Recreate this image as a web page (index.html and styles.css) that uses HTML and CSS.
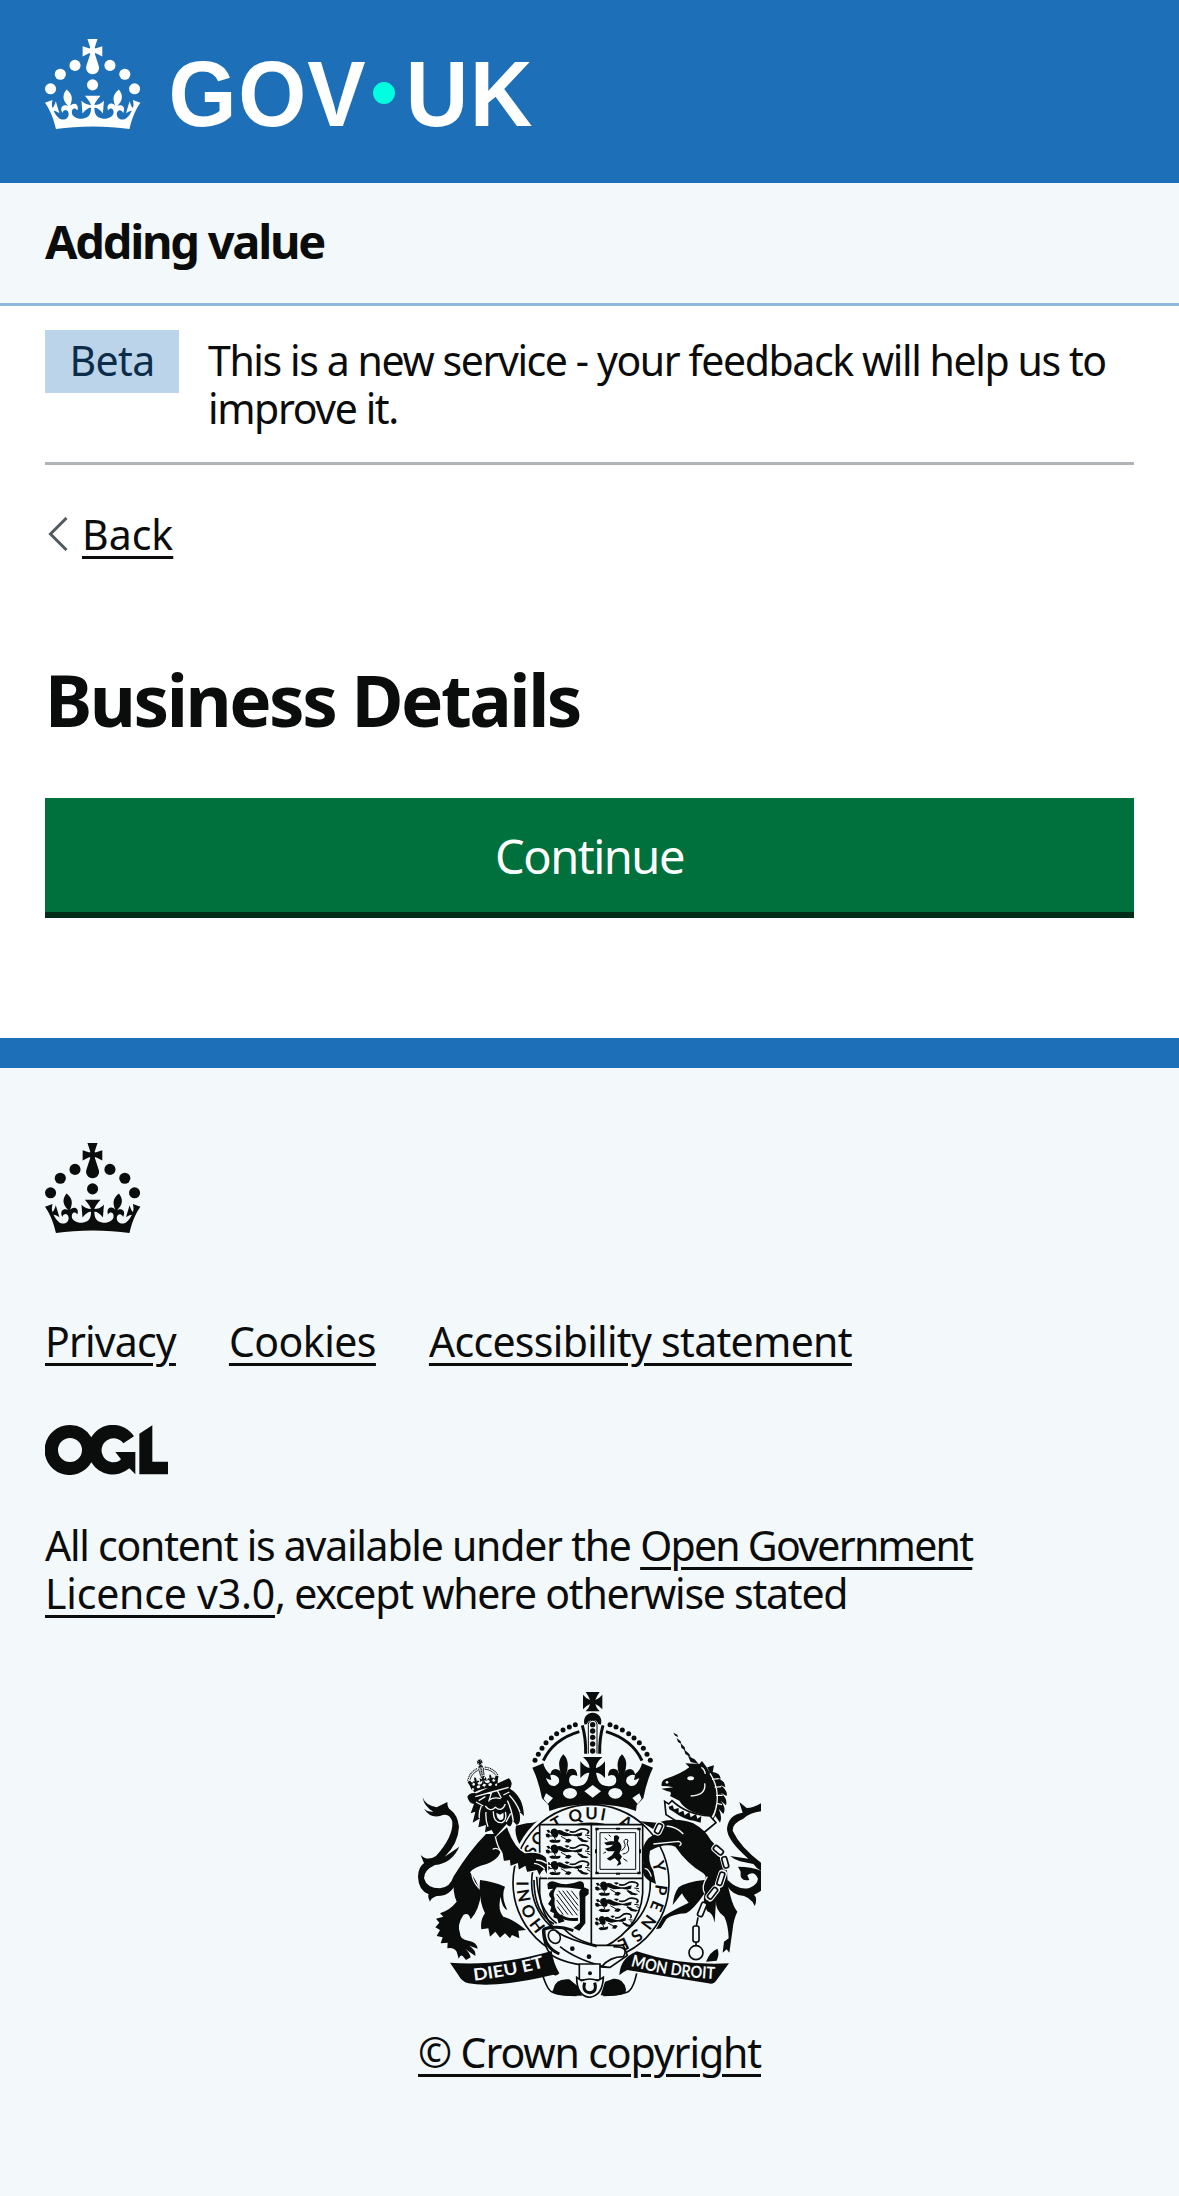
FILE: index.html
```html
<!DOCTYPE html>
<html lang="en">
<head>
<meta charset="utf-8">
<title>Business Details - Adding value - GOV.UK</title>
<link rel="stylesheet" href="styles.css">
</head>
<body>
<header class="header">
  <svg class="logo" viewBox="0 0 324 60" role="img" aria-label="GOV.UK">
    <g id="crown">
      <circle cx="20" cy="17.6" r="3.7"/><circle cx="10.2" cy="23.5" r="3.7"/><circle cx="3.7" cy="33.2" r="3.7"/><circle cx="31.7" cy="30.6" r="3.7"/><circle cx="43.3" cy="17.6" r="3.7"/><circle cx="53.2" cy="23.5" r="3.7"/><circle cx="59.7" cy="33.2" r="3.7"/>
      <path d="M33.1,9.8c.2-.1.3-.3.5-.5l4.6,2.4v-6.8l-4.6,1.5c-.1-.2-.3-.3-.5-.5l1.9-5.9h-6.7l1.9,5.9c-.2.1-.3.3-.5.5l-4.6-1.5v6.8l4.6-2.4c.1.2.3.3.5.5l-2.6,8c-.9,2.8,1.2,5.7,4.1,5.7h0c3,0,5.1-2.9,4.1-5.7l-2.6-8ZM37,37.9s-3.4,3.8-4.1,6.1c2.2,0,4.2-.5,6.4-2.8l-.7,8.5c-2-2.8-4.4-4.1-5.7-3.8.1,3.1.5,6.7,5.8,7.2,3.7.3,6.7-1.5,7-3.8.4-2.6-2-4.3-3.7-1.6-1.4-4.5,2.4-6.1,4.9-3.2-1.9-4.5-1.8-7.7,2.4-10.9,3,4,2.6,7.3-1.2,11.1,2.4-1.3,6.2,0,4,4.6-1.2-2.8-3.7-2.2-4.2.2-.3,1.7.7,3.7,3,4.2,1.9.3,4.7-.9,7-5.9-1.3,0-2.4.7-3.9,1.7l2.4-8c.6,2.3,1.4,3.7,2.2,4.5.6-1.6.5-2.8,0-5.3l5,1.8c-2.6,3.6-5.2,8.7-7.3,17.5-7.4-1.1-15.7-1.7-24.5-1.7h0c-8.8,0-17.1.6-24.5,1.7-2.1-8.9-4.7-13.9-7.3-17.5l5-1.8c-.5,2.5-.6,3.7,0,5.3.8-.8,1.6-2.3,2.2-4.5l2.4,8c-1.5-1-2.6-1.7-3.9-1.7,2.3,5,5.2,6.2,7,5.9,2.3-.4,3.3-2.4,3-4.2-.5-2.4-3-3.1-4.2-.2-2.2-4.6,1.6-6,4-4.6-3.7-3.7-4.2-7.1-1.2-11.1,4.2,3.2,4.3,6.4,2.4,10.9,2.5-2.8,6.3-1.3,4.9,3.2-1.8-2.7-4.1-1-3.7,1.6.3,2.3,3.3,4.1,7,3.8,5.4-.5,5.7-4.2,5.8-7.2-1.3-.2-3.7,1-5.7,3.8l-.7-8.5c2.2,2.3,4.2,2.7,6.4,2.8-.7-2.3-4.1-6.1-4.1-6.1h10.6,0Z"/>
    </g>
    <text class="logo-text" transform="scale(.94 1)" y="58" x="87.6 137 186">GOV</text>
    <circle class="logo-dot" cx="226" cy="36" r="7.3"/>
    <text class="logo-text" transform="scale(.93 1)" y="58" x="258.6 304.6">UK</text>
  </svg>
</header>
<section class="service-nav"><span class="service-name">Adding value</span></section>
<div class="container">
  <div class="phase-banner">
    <strong class="tag">Beta</strong>
    <p class="phase-text">This is a new service - your feedback will help us to<br>improve it.</p>
  </div>
  <a class="back-link" href="#"><svg class="chevron" viewBox="0 0 20 34"><path d="M18.5 1 2.5 17 18.5 33"/></svg><span class="link">Back</span></a>
  <main>
    <h1 class="heading">Business Details</h1>
    <button class="button" type="button">Continue</button>
  </main>
</div>
<footer class="footer">
  <svg class="footer-crown" viewBox="0 0 64 60"><use href="#crown"/></svg>
  <nav class="footer-links"><a class="link link-privacy" href="#">Privacy</a><a class="link link-cookies" href="#">Cookies</a><a class="link link-accessibility" href="#">Accessibility statement</a></nav>
  <svg class="ogl" viewBox="0 0 369 150">
    <path fill-rule="evenodd" d="M75 0A75 75 0 0 1 139 37A75 75 0 0 1 267 34L235 55A36 36 0 1 0 222 108L228 103L211 81H271V148L253 130A75 75 0 0 1 139 112A75 75 0 1 1 75 0ZM75 39A36 36 0 1 0 75 111A36 36 0 1 0 75 39ZM283 26 322 1V110H369V148H283Z"/>
  </svg>
  <p class="licence">All content is available under the <a class="link link-open" href="#">Open Government</a><br><a class="link link-version" href="#">Licence v3.0</a>, except where otherwise stated</p>
  <a class="copyright" href="#">
    <svg class="arms" viewBox="24 36 1029 918">
      <defs>
        <path id="garter-path" d="M545 798A190 190 0 1 1 546 798"/>
        <path id="motto-left" d="M192 902Q300 890 415 858"/>
        <path id="motto-right" d="M662 858Q780 892 930 898"/>
        <g id="crown-half">
          <path d="M367 263L400 250Q404 270 420 282L424 300Q418 300 408 294Q416 322 436 317Q454 308 444 292Q434 280 420 286Q426 258 450 272L454 284Q438 244 460 223Q482 244 468 284L474 270Q500 258 502 288Q485 280 479 292Q472 312 492 318Q522 322 532 300Q536 288 538 278Q525 278 511 294V244Q525 262 538 264Q540 250 519 231H549V373Q470 373 418 393L416 376L396 355Q385 300 367 263Z"/>
          <path class="thick" d="M400 242Q430 178 508 155M517 136Q528 175 527 221"/>
          <circle cx="496" cy="134" r="7.5"/><circle cx="478" cy="141" r="7.5"/><circle cx="459" cy="150" r="7.5"/><circle cx="440" cy="161" r="7.5"/><circle cx="424" cy="174" r="7.5"/><circle cx="408" cy="188" r="7.5"/><circle cx="396" cy="205" r="7.5"/><circle cx="385" cy="223" r="7.5"/><circle cx="375" cy="241" r="7.5"/>
          <ellipse class="bg" cx="480" cy="340" rx="21" ry="16"/>
          <path class="bg" d="M408 340 429 354 413 372 401 356Z"/>
        </g>
        <g id="royal-crown">
          <use href="#crown-half"/><use href="#crown-half" transform="matrix(-1 0 0 1 1096 0)"/>
          <path d="M527 36H569Q559 50 556 60Q566 57 577 44V88Q566 76 556 72Q558 83 569 94H527Q538 83 540 72Q530 76 519 88V44Q530 57 540 60Q537 50 527 36Z"/>
          <path d="M524 134A26 26 0 1 1 572 134L565 132A18 18 0 0 0 531 132Z"/>
          <path class="thin" d="M535 221V134A13 13 0 0 1 561 134V221"/>
          <circle cx="548" cy="134" r="8"/><circle cx="548" cy="153" r="8"/><circle cx="548" cy="172" r="8"/><circle cx="548" cy="192" r="8"/><circle cx="548" cy="213" r="8"/>
          <path class="bg" d="M548 315 573 334 548 353 523 334Z"/>
        </g>
        <g id="passant">
          <path d="M20 8Q26 0 36 4L42 14Q44 24 36 30L26 28 20 18ZM38 8Q50 4 58 12L76 18Q88 22 98 18L114 14 112 24Q98 28 86 24L60 26 44 20ZM4 20Q10 14 18 22L14 30 6 28ZM14 40Q22 32 34 38L48 36Q50 44 40 45H22ZM66 36Q74 30 82 38L74 45 62 43ZM98 30Q110 28 118 36L134 40 126 44 112 42ZM6 8 14 6 18 12 12 16ZM60 6Q70 2 76 8L68 12Z"/>
          <path class="thick-tail" d="M76 12Q90 16 100 8T128 6Q138 12 128 18"/>
          <path class="thin" d="M14 12 24 16M16 26 26 24M50 26 70 38M96 22 108 34M122 22 136 24M30 28 34 38M128 28 138 34"/>
        </g>
      </defs>

      <circle class="ring" cx="543" cy="608" r="234"/>
      <circle class="ring" cx="543" cy="608" r="178"/>
      <text class="garter"><textPath href="#garter-path" startOffset="152">HONI</textPath></text>
      <text class="garter"><textPath href="#garter-path" startOffset="376">SO</textPath></text>
      <text class="garter"><textPath href="#garter-path" startOffset="480">T</textPath></text>
      <text class="garter"><textPath href="#garter-path" startOffset="530">QUI</textPath></text>
      <text class="garter"><textPath href="#garter-path" startOffset="676">A</textPath></text>
      <text class="garter"><textPath href="#garter-path" startOffset="832">Y</textPath></text>
      <text class="garter garter-wide"><textPath href="#garter-path" startOffset="898">PENSE</textPath></text>

      <path class="field" d="M389 434H698V640Q690 760 544 820Q398 760 389 640Z"/>
      <path class="rule" d="M544 434V820M389 595H698"/>
      <use href="#passant" x="403" y="443"/><use href="#passant" x="403" y="491"/><use href="#passant" x="403" y="540"/>
      <use href="#passant" x="551" y="602"/><use href="#passant" x="551" y="651"/><use href="#passant" transform="translate(549 708) rotate(-6) scale(.86 1)"/>
      <path class="thin" d="M559 446H689V580H559ZM570 458H677V568H570Z"/>
      <path d="M556 443h10v8h-10zM682 443h10v8h-10zM556 575h10v8h-10zM682 575h10v8h-10zM618 443h12v6h-12zM618 578h12v6h-12zM555 508h6v12h-6zM687 508h6v12h-6z"/>
      <path d="M612 468Q622 462 628 472L624 484Q636 492 634 506L628 520 636 530 630 540 634 552 620 558 626 546 614 534 600 542 590 536 606 526 614 514 594 514 584 506 600 502 610 494 590 496 582 488 600 484 612 484Z"/>
      <path class="thin" d="M634 512Q652 500 642 486Q642 474 654 480Q648 490 656 504Q658 520 638 522M592 480 584 474M588 516 580 520M640 536 652 544M602 470 596 464"/>
      <path d="M412 612Q420 600 436 606Q470 620 508 604Q524 602 522 622L536 628V642L526 650L526 730L508 752L490 744L510 728L509 652Q505 632 514 628Q480 622 440 622Q426 640 434 654Q430 690 452 706L464 724 446 730L442 716L430 712L432 700L420 694L424 680L414 672L424 656Q408 640 430 626L414 628Z"/>
      <path class="thick" d="M450 706Q470 722 504 718"/>
      <path class="strings" d="M446 632 502 706M458 632 504 692M470 632 504 676M484 632 504 658M440 642 488 706M440 660 474 704M442 680 460 704"/>
      <path class="ring" d="M372 600Q372 700 432 732M380 590Q384 690 440 730"/>

      <use href="#royal-crown"/>

      <path d="M38 352Q45 375 80 382L112 366Q112 385 122 390Q143 405 147 440Q145 490 104 530L148 500Q125 550 75 555Q42 570 42 595Q50 625 90 625Q122 620 130 590L138 610Q120 650 80 648Q62 655 60 665Q52 650 56 643Q25 630 24 590Q25 560 42 550L32 525Q52 545 78 528Q130 470 127 425Q118 395 90 408Q60 415 42 386Q55 398 70 395Q42 380 38 352Z"/>
      <path d="M228 462Q180 510 130 590Q128 640 140 665Q120 690 90 700L100 710L78 716L88 728L76 742L90 750L80 768L98 772L92 790L113 788L112 805Q130 800 140 815L146 836Q152 822 158 828L168 840L182 832Q178 815 165 806L196 828Q200 812 178 797L203 806Q200 785 175 782Q150 780 150 760Q140 735 160 705Q176 695 182 718Q208 690 213 640Q200 600 180 577Q190 562 230 552Q274 535 272 505Q262 480 262 462Z"/>
      <path d="M318 437L350 430Q375 430 385 420Q350 450 328 492Q312 460 318 437Z"/>
      <path class="edge" d="M256 470L292 438Q312 500 345 518Q385 512 408 530Q415 540 412 590L402 570Q395 575 388 590L380 572L350 578L345 560L325 572L322 552L300 560L298 542L280 545L276 520Q262 500 256 470Z"/>
      <path class="cut" d="M378 540Q395 540 410 550M372 550Q390 552 404 566M248 508Q262 500 274 515M186 578Q184 600 208 626"/>
      <path d="M210 600Q250 605 285 620Q272 650 292 690Q276 684 272 650Q262 690 280 710Q310 718 348 750L325 752L328 775L306 765L300 775L285 760L270 773L256 755L240 770L235 745L214 748Q210 720 225 700Q205 660 210 600Z"/>
      <path d="M172 350Q180 335 200 340L296 295Q312 305 300 326Q340 350 342 408L328 395Q335 430 320 435L308 422Q302 450 290 432L256 470L245 450L225 457L228 435L205 442L210 415L188 428L196 395L182 400L192 372Q175 368 172 350Z"/>
      <path class="cut" d="M196 350 246 336 296 322M245 336 236 365M262 332 274 354M238 360Q252 350 272 356M226 378Q240 398 256 382Q276 398 286 372M206 362 226 350M280 345 298 336M250 394Q250 430 276 428Q292 420 286 396M298 346Q318 366 330 396M292 362Q306 390 310 424M214 378Q206 396 208 414M228 396Q226 420 234 440M288 426 302 400M198 366 220 378"/>
      <path class="bg" d="M259 398Q260 420 274 420Q284 416 280 398L270 404Z"/>
      <use href="#royal-crown" transform="translate(65 257) rotate(-11) scale(.262 .262)"/>

      <path d="M790 158 802 164 804 172 794 166ZM800 174 812 184 814 192 804 186ZM812 190 824 202 826 212 814 203ZM822 208 838 222 842 232 826 222ZM834 228 854 238 866 252 842 246Z"/>
      <path d="M755 318Q752 300 772 295Q815 280 838 262L826 250L868 252L876 243L890 262Q910 290 918 340Q922 385 905 410L885 405Q830 398 808 362L780 348Q788 334 772 334L754 326L790 322Q775 318 755 318Z"/>
      <path d="M892 262 912 256 908 276Q930 278 932 296L920 294Q946 302 946 322L930 314Q954 330 950 348L932 338Q954 356 948 376L932 362Q950 384 940 402L926 386Q938 410 930 428L916 408L902 432Q938 360 892 262Z"/>
      <path class="cut" d="M884 310Q890 346 842 348M874 262Q884 268 886 282M900 280Q938 340 910 410M906 298 926 296M914 322 934 320M918 346 938 346M920 370 936 374"/>
      <ellipse class="bg" cx="842" cy="295" rx="10" ry="6"/><circle class="bg" cx="771" cy="307" r="4"/>
      <path class="field" d="M764 364L776 372L786 362Q830 404 900 408L918 428L884 456Q820 440 768 404Z"/>
      <path d="M776 380l12-4 4 12 14-4 0 14 14-6 4 14 14-10 4 16 16-10 4 14 12-8-2 20-20-6-14-2-16-6-16-8-14-10-14-8Z"/>
      <path d="M700 500Q712 466 748 458L728 446L690 424L740 428Q800 410 850 430Q886 450 902 480Q952 530 952 590Q952 620 962 650Q970 680 982 695Q970 720 968 748L958 818L950 808L938 818L942 785L956 775Q955 735 943 710Q915 690 918 662L914 728Q908 698 892 694Q876 670 884 640Q850 690 828 700Q790 702 770 716L752 745L738 748L758 712Q770 700 836 668Q820 650 816 640L788 675Q792 640 806 622Q830 605 884 600Q892 590 880 580Q830 550 796 500Q765 488 720 512Q712 545 730 572L738 612L724 606Q690 590 700 550Q694 520 700 500Z"/>
      <path class="cut" d="M770 438Q800 440 820 462M730 492 806 484Q820 490 808 498M884 640Q872 620 892 590M704 566Q716 564 724 590"/>
      <path d="M888 845Q900 815 922 806Q930 820 920 842Z"/>
      <path d="M1053 394Q1020 398 1000 416Q966 430 968 452Q990 500 1053 548V572Q1040 566 1030 552L990 544Q975 540 960 528L1015 536Q950 480 951 445Q955 405 998 398Q992 380 988 366L1010 384Q1030 384 1053 370Z"/>
      <path d="M953 600Q985 632 1018 624Q1042 614 1044 596Q1032 570 1012 586L1018 600Q988 606 992 575L984 560Q1024 560 1053 572V632Q1042 640 1032 644Q1044 655 1034 678Q1022 648 985 645Q955 635 950 610Z"/>

      <g id="chain-links" class="chain-edge">
        <rect x="738" y="428" width="20" height="34" rx="8" transform="rotate(25 745 440)"/>
        <rect x="912" y="494" width="20" height="36" rx="8" transform="rotate(-50 922 508)"/>
        <rect x="937" y="526" width="18" height="40" rx="8" transform="rotate(-15 946 546)"/>
        <rect x="924" y="572" width="18" height="48" rx="8" transform="rotate(18 932 596)"/>
        <rect x="899" y="617" width="18" height="46" rx="8" transform="rotate(38 908 640)"/>
      </g>
      <g class="chain">
        <rect x="740" y="430" width="16" height="30" rx="6" transform="rotate(25 745 440)"/>
        <rect x="914" y="496" width="16" height="32" rx="6" transform="rotate(-50 922 508)"/>
        <rect x="938" y="530" width="15" height="34" rx="6" transform="rotate(-15 946 546)"/>
        <rect x="925" y="576" width="15" height="40" rx="6" transform="rotate(18 932 596)"/>
        <rect x="900" y="621" width="15" height="38" rx="6" transform="rotate(38 908 640)"/>
        <rect x="868" y="667" width="16" height="44" rx="6" transform="rotate(22 878 690)"/>
        <rect x="849" y="738" width="18" height="48" rx="6"/>
        <path d="M894 662 890 670M864 712 859 738M858 786V798"/>
        <circle cx="858" cy="818" r="21"/>
      </g>

      <path class="field" d="M398 750Q410 735 460 744Q490 780 560 796L640 796L652 826L600 862Q480 860 425 826Q400 800 398 750Z"/>
      <path class="thick" d="M402 750Q400 800 448 822M400 748Q440 734 490 752"/>
      <ellipse class="ring" cx="433" cy="770" rx="17" ry="21" transform="rotate(-30 433 770)"/>
      <path class="rule" d="M440 756Q480 780 560 800M450 800Q500 840 590 862M610 800Q660 800 640 830Q600 830 575 860"/>
      <circle cx="487" cy="806" r="7"/><circle cx="537" cy="830" r="7"/>
      <path class="field" d="M508 852H570V900H508Z"/><circle cx="540" cy="880" r="6"/>
      <path d="M430 928Q436 894 478 898L505 920L516 947Q450 950 425 938Z"/>
      <path d="M648 928Q642 894 610 896L585 905L572 946Q630 950 646 938Z"/>
      <path class="rule" d="M396 880Q415 940 430 936Q450 946 500 946M680 880Q668 936 646 938Q620 946 580 946"/>
      <path class="field" d="M500 892Q500 948 538 952Q578 948 580 892L564 902Q540 892 514 902Z"/>
      <path class="thick" d="M524 908Q516 936 540 938Q562 936 554 908"/>

      <path d="M120 848Q260 860 425 813Q430 850 448 880Q440 890 430 884Q260 925 175 910Q155 905 145 885Z"/>
      <path d="M628 886Q630 835 680 814Q810 858 957 850L920 900Q912 914 895 910Q770 890 652 870Q640 875 628 886Z"/>
      <text class="motto"><textPath href="#motto-left" textLength="216" lengthAdjust="spacingAndGlyphs">DIEU ET</textPath></text>
      <text class="motto"><textPath href="#motto-right" textLength="256" lengthAdjust="spacingAndGlyphs">MON DROIT</textPath></text>
    </svg>
    <span class="link link-copyright">© Crown copyright</span>
  </a>
</footer>
</body>
</html>
```
FILE: styles.css
```css
* { box-sizing: border-box; }
body {
  margin: 0;
  background: #fff;
  color: #0b0c0c;
  font: 41px/48px "Noto Sans", "Open Sans", sans-serif;
}
p, h1 { margin: 0; }
a { color: inherit; text-decoration: none; }
svg { display: block; fill: currentColor; }
.link {
  text-decoration: underline;
  text-decoration-thickness: 3px;
  text-underline-offset: 6px;
}
.header {
  height: 183px;
  padding: 39px 45px 0;
  background: #1d70b8;
  color: #fff;
}
.logo { width: 486px; height: 90px; overflow: visible; }
.logo-text { font: bold 62px "Liberation Sans", sans-serif; }
.logo-dot { fill: #00ffe0; }
.service-nav {
  height: 123px;
  padding: 28px 45px 0;
  background: #f3f8fa;
  border-bottom: 3px solid #8eb8dc;
  font-size: 47px;
  line-height: 60px;
  font-weight: bold;
  letter-spacing: -2.25px;
}
.container { padding: 0 45px; }
.phase-banner {
  display: flex;
  align-items: flex-start;
  gap: 29px;
  height: 159px;
  padding-top: 24px;
  border-bottom: 3px solid #b1b4b6;
}
.tag {
  flex: none;
  width: 134px;
  height: 63px;
  padding-top: 6px;
  background: #bbd4ea;
  color: #0c2d4a;
  font-weight: normal;
  letter-spacing: -0.6px;
  text-align: center;
}
.phase-text { padding-top: 6px; white-space: nowrap; letter-spacing: -1.4px; }
.back-link { display: flex; width: max-content; margin-top: 45px; }
.chevron {
  width: 20px;
  height: 34px;
  margin: 7px 14px 0 3px;
  fill: none;
  stroke: #505a5f;
  stroke-width: 3;
}
.heading {
  margin-top: 104px;
  font-size: 71px;
  line-height: 75px;
  letter-spacing: -2.45px;
}
.button {
  display: block;
  width: 100%;
  height: 120px;
  margin: 61px 0 120px;
  padding: 30px 0 27px;
  border: 0;
  border-bottom: 6px solid #002d18;
  background: #00703c;
  color: #fff;
  font: 47px/57px "Noto Sans", "Open Sans", sans-serif;
  letter-spacing: -1.5px;
}
.footer {
  height: 1158px;
  padding: 75px 45px 0;
  border-top: 30px solid #1d70b8;
  background: #f3f8fa;
}
.footer-crown { width: 96px; height: 90px; }
.footer-links { display: flex; gap: 53px; margin-top: 84px; }
.link-privacy { letter-spacing: -0.83px; }
.link-cookies { letter-spacing: -0.54px; }
.link-accessibility { letter-spacing: -0.69px; }
.ogl { width: 123px; height: 50px; margin-top: 60px; }
.licence { margin-top: 46px; white-space: nowrap; letter-spacing: -1.24px; }
.link-open { letter-spacing: -1.73px; }
.link-version { letter-spacing: -0.2px; }
.copyright {
  display: flex;
  flex-direction: column;
  align-items: center;
  gap: 30px;
  margin-top: 75px;
}
.link-copyright { letter-spacing: -1.1px; }
.arms { width: 343px; height: 306px; }
.arms .bg { fill: #f3f8fa; }
.arms .field { fill: #f3f8fa; stroke: currentColor; stroke-width: 5; }
.arms .ring, .arms .rule { fill: none; stroke: currentColor; stroke-width: 5; }
.arms .thick { fill: none; stroke: currentColor; stroke-width: 9; }
.arms .thick-tail { fill: none; stroke: currentColor; stroke-width: 5; }
.arms .thin { fill: none; stroke: currentColor; stroke-width: 3; }
.arms .strings { stroke: currentColor; stroke-width: 3; }
.arms .cut { fill: none; stroke: #f3f8fa; stroke-width: 4; }
.arms .edge { stroke: #f3f8fa; stroke-width: 4; }
.arms .chain { fill: #f3f8fa; stroke: currentColor; stroke-width: 5; }
.arms .chain-edge { fill: #f3f8fa; stroke: #f3f8fa; stroke-width: 8; }
.garter { font: bold 50px Lato, sans-serif; letter-spacing: 6px; }
.garter-wide { letter-spacing: 16px; }
.motto { fill: #f3f8fa; font: bold 50px Lato, sans-serif; }
```
